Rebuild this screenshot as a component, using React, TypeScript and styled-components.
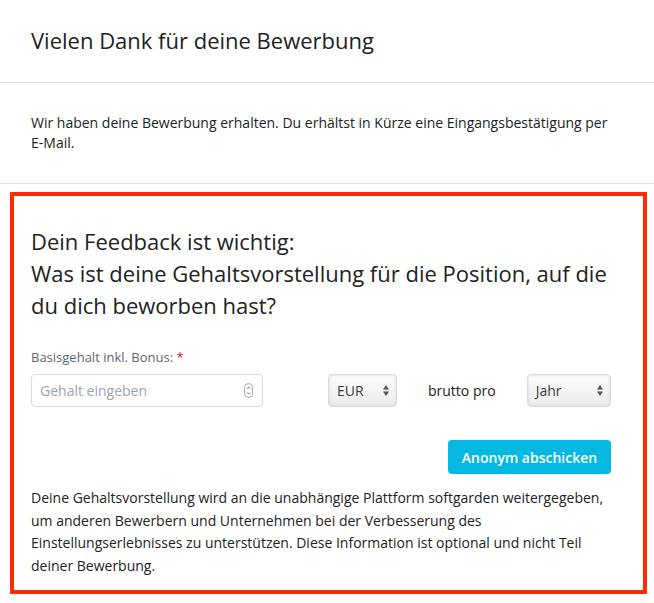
import styled, { createGlobalStyle } from "styled-components";

const GlobalStyle = createGlobalStyle`
  html, body {
    margin: 0;
    padding: 0;
    background: #ffffff;
  }
  body {
    font-family: "Open Sans", "Liberation Sans", sans-serif;
    color: #262626;
    -webkit-font-smoothing: antialiased;
  }
`;

const Page = styled.div`
  width: 654px;
  display: flex;
  flex-direction: column;
`;

const Header = styled.div`
  padding: 24px 31px 26px;
  border-bottom: 1px solid #e3e3e3;
`;

const Title = styled.h1`
  margin: 0;
  font-size: 22px;
  line-height: 32px;
  font-weight: 400;
  color: #222;
`;

const Intro = styled.p`
  margin: 0;
  padding: 30px 31px;
  font-size: 14px;
  line-height: 20px;
  color: #222;
  border-bottom: 1px solid #e3e3e3;
`;

const FeedbackBox = styled.section`
  margin: 8px 7px 0 10px;
  border: 4px solid #ff2a00;
  padding: 29px 32px 13px 17px;
  display: flex;
  flex-direction: column;
`;

const Question = styled.h2`
  margin: 0;
  font-size: 22px;
  line-height: 32px;
  font-weight: 400;
  color: #222;
`;

const Label = styled.label`
  margin-top: 27px;
  font-size: 13px;
  line-height: 18px;
  color: #5d6670;
`;

const Required = styled.span`
  color: #c4122f;
`;

const FormRow = styled.div`
  margin-top: 8px;
  display: flex;
  align-items: center;
  gap: 31px;
`;

const InputBox = styled.div`
  width: 232px;
  height: 33px;
  box-sizing: border-box;
  border: 1px solid #d6dbe0;
  border-radius: 4px;
  display: flex;
  align-items: center;
  padding: 0 9px 0 8px;
  background: #fff;
`;

const TextInput = styled.input`
  flex: 1;
  min-width: 0;
  border: 0;
  outline: none;
  background: transparent;
  font-family: inherit;
  font-size: 14px;
  color: #333;
  padding: 0;

  &::placeholder {
    color: #9ba4ae;
  }
`;

const SelectBox = styled.div<{ $width: number; $offset?: number }>`
  width: ${(p) => p.$width}px;
  margin-left: ${(p) => p.$offset ?? 0}px;
  height: 33px;
  box-sizing: border-box;
  border: 1px solid #d9dcdf;
  border-radius: 4px;
  background: linear-gradient(#fbfbfb, #ececec);
  box-shadow: inset 0 0 3px rgba(0, 0, 0, 0.12);
  display: flex;
  align-items: center;
  justify-content: space-between;
  padding: 0 6px 0 8px;
  font-size: 14px;
  color: #3a3a3a;
`;

const RowText = styled.span`
  font-size: 14px;
  color: #222;
`;

const Actions = styled.div`
  margin-top: 33px;
  display: flex;
  justify-content: flex-end;
`;

const SubmitButton = styled.button`
  height: 34px;
  width: 163px;
  border: 0;
  border-radius: 4px;
  background: #05b8e2;
  color: #fff;
  font-family: inherit;
  font-size: 14px;
  font-weight: 600;
  cursor: pointer;
`;

const Note = styled.p`
  margin: 13px 0 0;
  font-size: 14px;
  line-height: 22.6px;
  color: #222;
`;

const Spinner = () => (
  <svg width="9" height="15" viewBox="0 0 9 15">
    <rect x="0.5" y="0.5" width="8" height="14" rx="4" fill="#fff" stroke="#a8a8a8" />
    <path d="M3 5.5 L4.5 4 L6 5.5" fill="none" stroke="#555" strokeWidth="0.9" />
    <path d="M3 9.5 L4.5 11 L6 9.5" fill="none" stroke="#555" strokeWidth="0.9" />
  </svg>
);

const Arrows = () => (
  <svg width="8" height="13" viewBox="0 0 8 13">
    <path d="M4 1 L7 5.5 L1 5.5 Z" fill="#555" />
    <path d="M4 12 L7 7.5 L1 7.5 Z" fill="#555" />
  </svg>
);

export default function App() {
  return (
    <Page>
      <GlobalStyle />
      <Header>
        <Title>Vielen Dank für deine Bewerbung</Title>
      </Header>
      <Intro>
        Wir haben deine Bewerbung erhalten. Du erhältst in Kürze eine
        Eingangsbestätigung per E-Mail.
      </Intro>
      <FeedbackBox>
        <Question>
          Dein Feedback ist wichtig:
          <br />
          Was ist deine Gehaltsvorstellung für die Position, auf die du dich
          beworben hast?
        </Question>
        <Label>
          Basisgehalt inkl. Bonus: <Required>*</Required>
        </Label>
        <FormRow>
          <InputBox>
            <TextInput placeholder="Gehalt eingeben" />
            <Spinner />
          </InputBox>
          <SelectBox $width={69} $offset={34}>
            <span>EUR</span>
            <Arrows />
          </SelectBox>
          <RowText>brutto pro</RowText>
          <SelectBox $width={84}>
            <span>Jahr</span>
            <Arrows />
          </SelectBox>
        </FormRow>
        <Actions>
          <SubmitButton>Anonym abschicken</SubmitButton>
        </Actions>
        <Note>
          Deine Gehaltsvorstellung wird an die unabhängige Plattform softgarden
          weitergegeben, um anderen Bewerbern und Unternehmen bei der
          Verbesserung des Einstellungserlebnisses zu unterstützen. Diese
          Information ist optional und nicht Teil deiner Bewerbung.
        </Note>
      </FeedbackBox>
    </Page>
  );
}
